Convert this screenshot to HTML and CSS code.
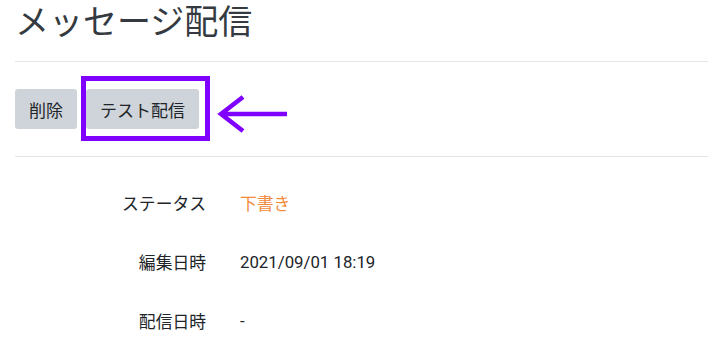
FILE: index.html
```html
<!DOCTYPE html>
<html lang="ja">
  <head>
    <meta charset="UTF-8" />
    <meta name="viewport" content="width=device-width, initial-scale=1.0" />
    <title>メッセージ配信</title>
    <link rel="stylesheet" href="styles.css">
  </head>
  <body>
    <h1 class="page-title">メッセージ配信</h1>
    <hr class="divider" />

    <div class="actions">
      <button class="btn">削除</button>
      <div class="marked">
        <button class="btn">テスト配信</button>
        <span class="mark-box"></span>
      </div>
      <svg class="arrow" width="74" height="40" viewBox="0 0 74 40">
        <path d="M72 20 H6 M28 3 L6 20 L28 37" fill="none" stroke="#8000ff" stroke-width="4.5" />
      </svg>
    </div>

    <hr class="divider" />

    <dl class="details">
      <div class="row">
        <dt>ステータス</dt>
        <dd class="draft">下書き</dd>
      </div>
      <div class="row">
        <dt>編集日時</dt>
        <dd>2021/09/01 18:19</dd>
      </div>
      <div class="row">
        <dt>配信日時</dt>
        <dd>-</dd>
      </div>
    </dl>
  </body>
</html>
```

FILE: styles.css
```css
body {
  margin: 0;
  padding-left: 15px;
  font-family: Roboto, "Noto Sans CJK JP", sans-serif;
  color: #212529;
  background: #fff;
}
.page-title {
  margin: 0;
  padding-top: 2px;
  font-size: 34px;
  font-weight: 400;
  line-height: 40px;
  color: #343a40;
}
.divider {
  margin: 0;
  border: 0;
  border-top: 1px solid #e5e5e5;
}
.page-title + .divider {
  margin-top: 19px;
}
.actions {
  display: flex;
  align-items: center;
  gap: 9px;
  padding: 27px 0 27px;
}
.btn {
  height: 40px;
  padding: 0 14px;
  border: 0;
  border-radius: 3px;
  background: #cfd4da;
  color: #212529;
  font-family: "Noto Sans CJK JP", sans-serif;
  font-size: 17px;
}
.marked {
  position: relative;
}
.mark-box {
  position: absolute;
  left: -5px;
  top: -13px;
  right: -11px;
  bottom: -12px;
  border: 5px solid #8000ff;
}
.arrow {
  margin: 5px 0 -5px 7px;
}
.details {
  margin: 0;
  padding-top: 16px;
}
.row {
  display: flex;
  align-items: center;
  height: 59px;
  font-size: 16.8px;
}
.row dt {
  width: 191px;
  text-align: right;
  font-family: "Noto Sans CJK JP", sans-serif;
}
.row dd {
  margin: 0 0 0 34px;
}
.draft {
  color: #f28a3c;
  font-family: "Noto Sans CJK JP", sans-serif;
}
```
